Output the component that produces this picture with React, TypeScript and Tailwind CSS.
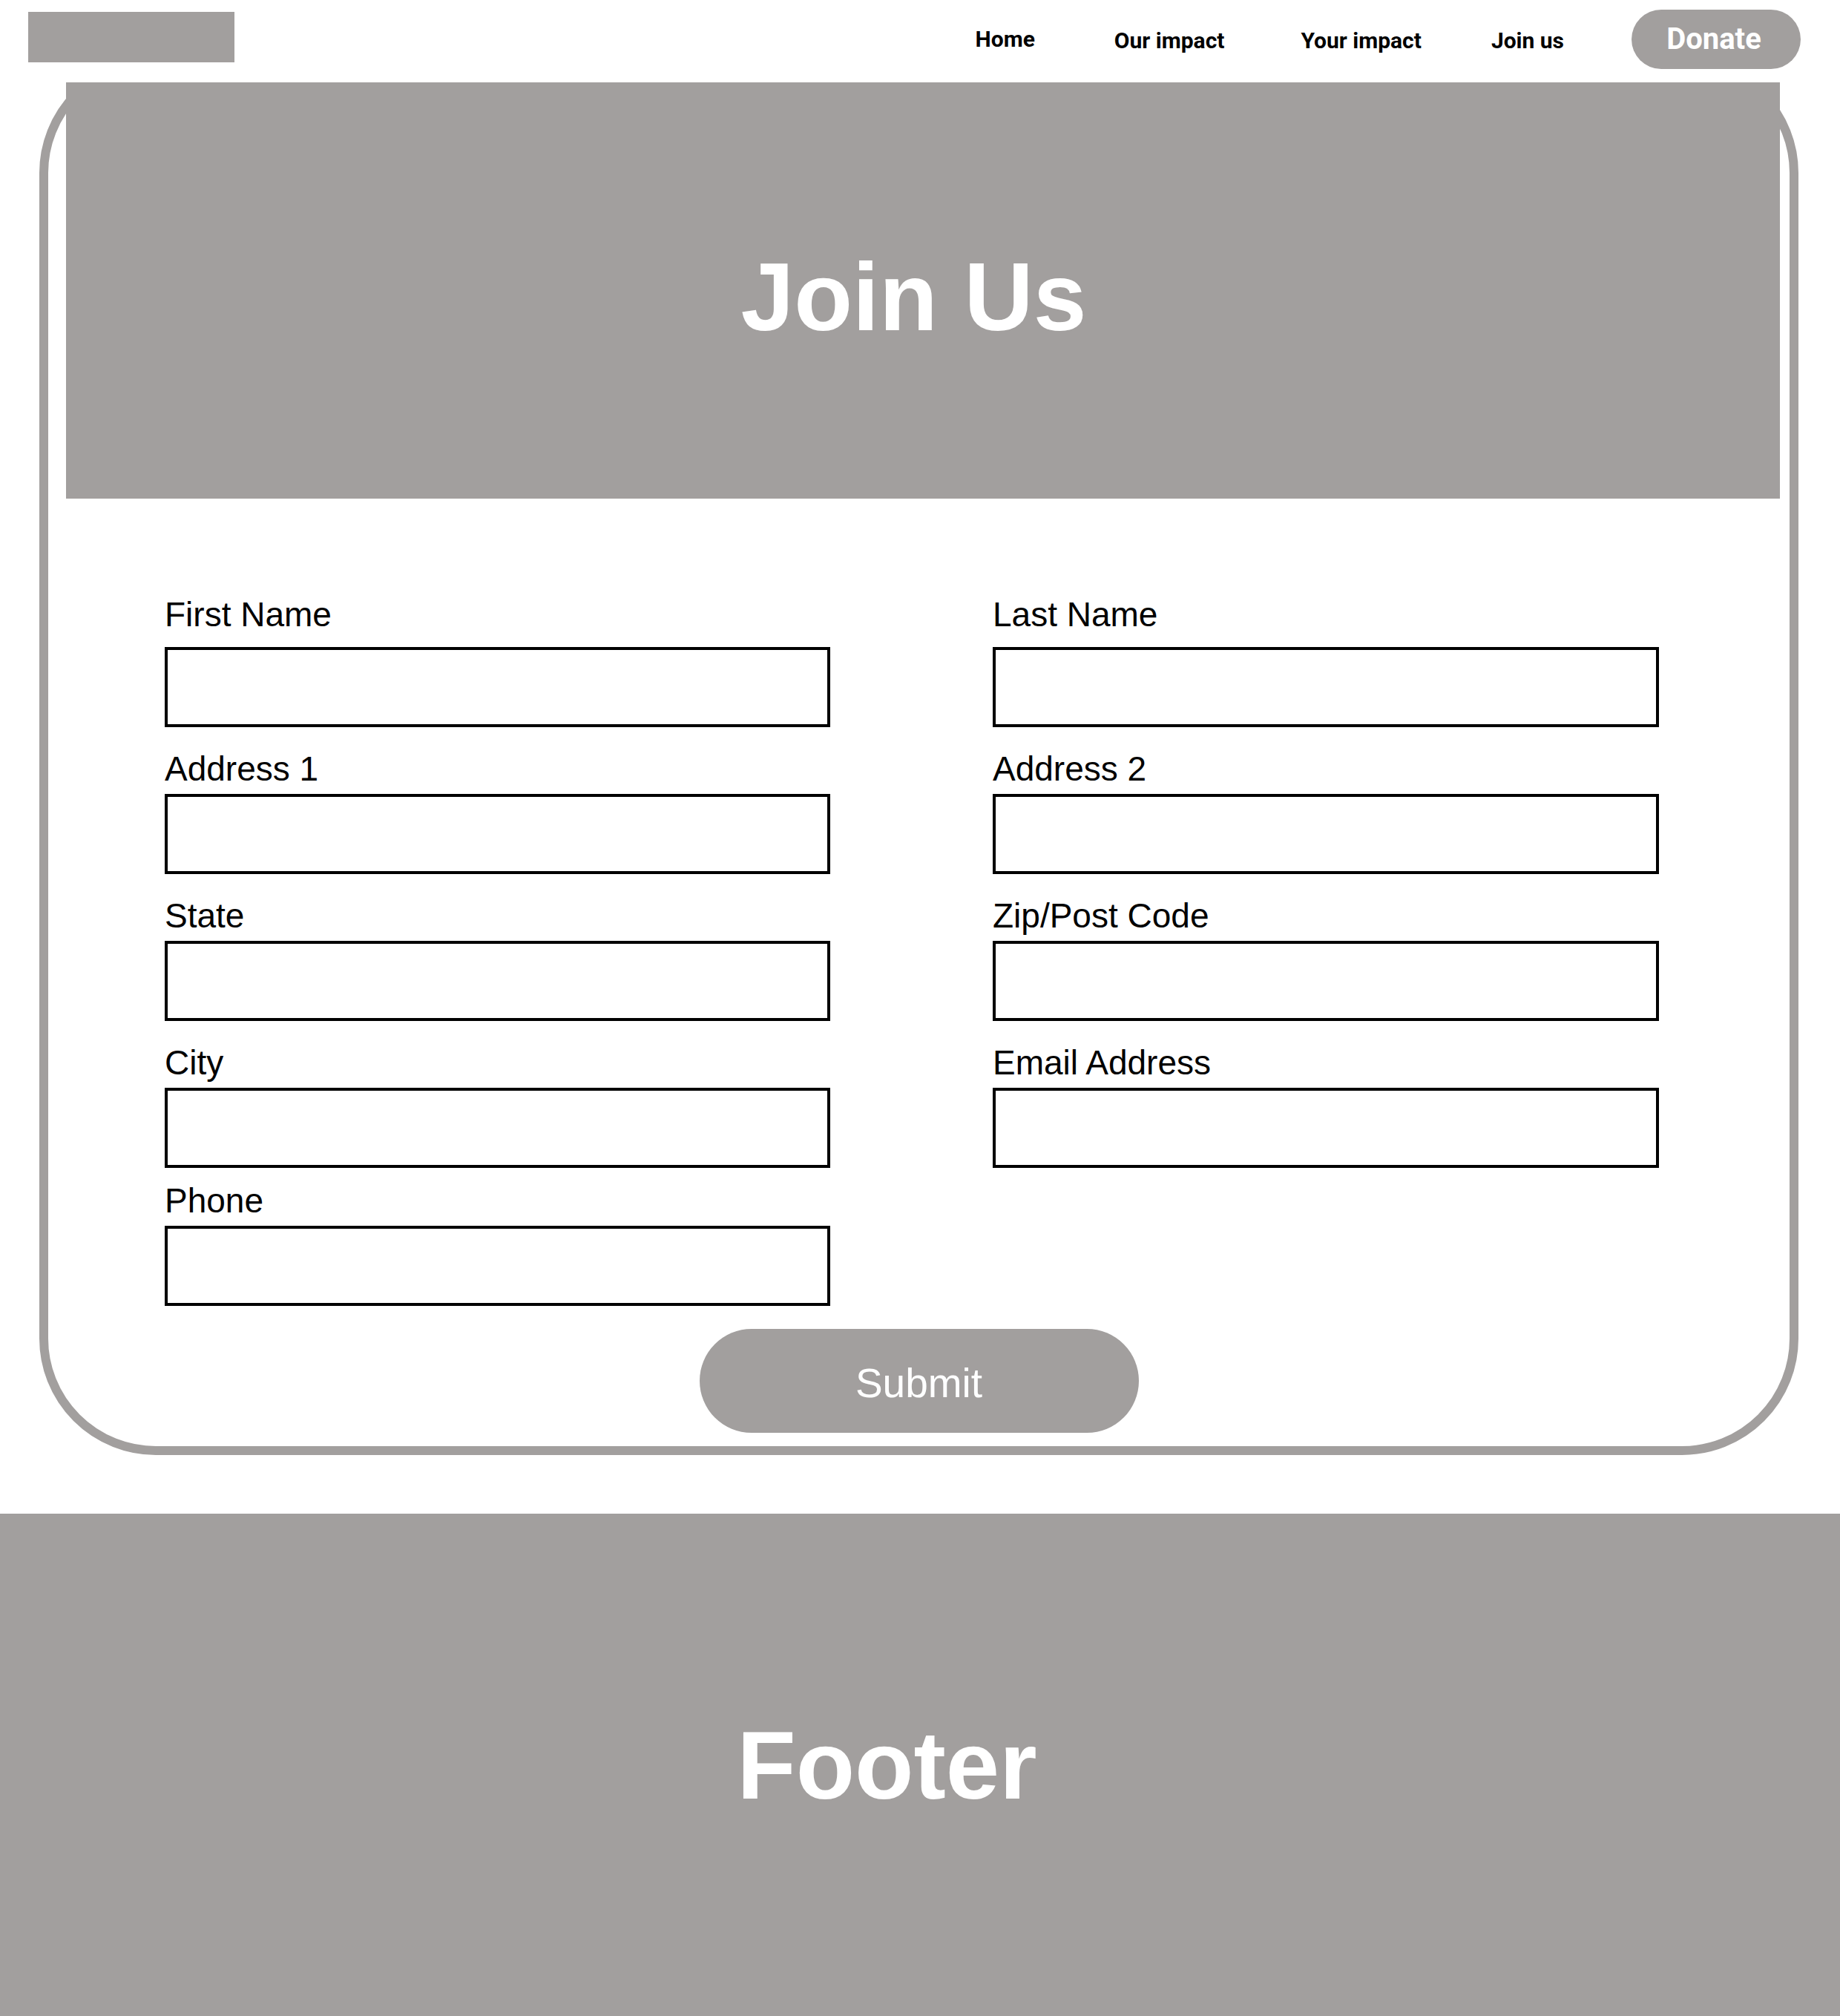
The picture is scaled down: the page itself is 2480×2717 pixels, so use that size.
import React from "react";

const fields: { label: string }[] = [
  { label: "First Name" },
  { label: "Last Name" },
  { label: "Address 1" },
  { label: "Address 2" },
  { label: "State" },
  { label: "Zip/Post Code" },
  { label: "City" },
  { label: "Email Address" },
];

function Field({ label, first }: { label: string; first?: boolean }) {
  return (
    <div className="flex flex-col">
      <label
        className={`block text-[46px] leading-[44px] text-black ${first ? "mb-[22px]" : "mb-[12px]"}`}
      >
        {label}
      </label>
      <input
        type="text"
        className="h-[108px] w-full border-4 border-black bg-white outline-none"
      />
    </div>
  );
}

export default function App() {
  return (
    <div
      className="w-[2480px] min-h-[2717px] bg-white"
      style={{ fontFamily: '"Liberation Sans", Arial, sans-serif' }}
    >
      {/* Header */}
      <header className="relative z-10 h-[111px] bg-white pt-[13px] pl-[38px] pr-[53px]">
        <div className="flex h-[80px] items-center">
          <div className="mt-[3px] h-[68px] w-[278px] self-start bg-[#a29f9e]" />
          <nav
            className="ml-auto flex items-center text-[30px] font-bold leading-[30px] text-black"
            style={{ fontFamily: 'Roboto, "Liberation Sans", sans-serif' }}
          >
            <a className="cursor-pointer">Home</a>
            <a className="ml-[107px] mt-[3px] cursor-pointer">Our impact</a>
            <a className="ml-[103px] mt-[3px] cursor-pointer">Your impact</a>
            <a className="ml-[94px] mt-[3px] cursor-pointer">Join us</a>
            <button className="ml-[91px] flex h-[80px] w-[228px] items-center justify-center rounded-full bg-[#a29f9e] pr-[6px] text-[40px] font-bold leading-[40px] text-white">
              Donate
            </button>
          </nav>
        </div>
      </header>

      {/* Card */}
      <main className="-mt-[35px] ml-[53px] mr-[56px] flex flex-col rounded-[157px] border-[12px] border-[#a29f9e] bg-white pb-[18px]">
        <section className="ml-[24px] mr-[13px] mt-[23px] flex h-[561px] items-center justify-center bg-[#a29f9e] pr-[25px] pt-[18px]">
          <h1 className="text-[129px] font-bold leading-none text-white">Join Us</h1>
        </section>

        <form className="ml-[157px] mt-[134px] grid grid-cols-[897px_898px] gap-x-[219px] gap-y-[34px]">
          {fields.map((f, i) => (
            <Field key={f.label} label={f.label} first={i < 2} />
          ))}
          <div className="-mt-[12px]">
            <Field label="Phone" />
          </div>
        </form>

        <button
          type="button"
          className="mx-auto mt-[31px] flex h-[140px] w-[592px] items-center justify-center rounded-full bg-[#a29f9e] pt-[6px] text-[55px] leading-none text-white"
        >
          Submit
        </button>
      </main>

      {/* Footer */}
      <footer className="mt-[79px] flex h-[677px] items-center justify-center bg-[#a29f9e] pr-[89px]">
        <h2 className="text-[130px] font-bold leading-none text-white">Footer</h2>
      </footer>
    </div>
  );
}
